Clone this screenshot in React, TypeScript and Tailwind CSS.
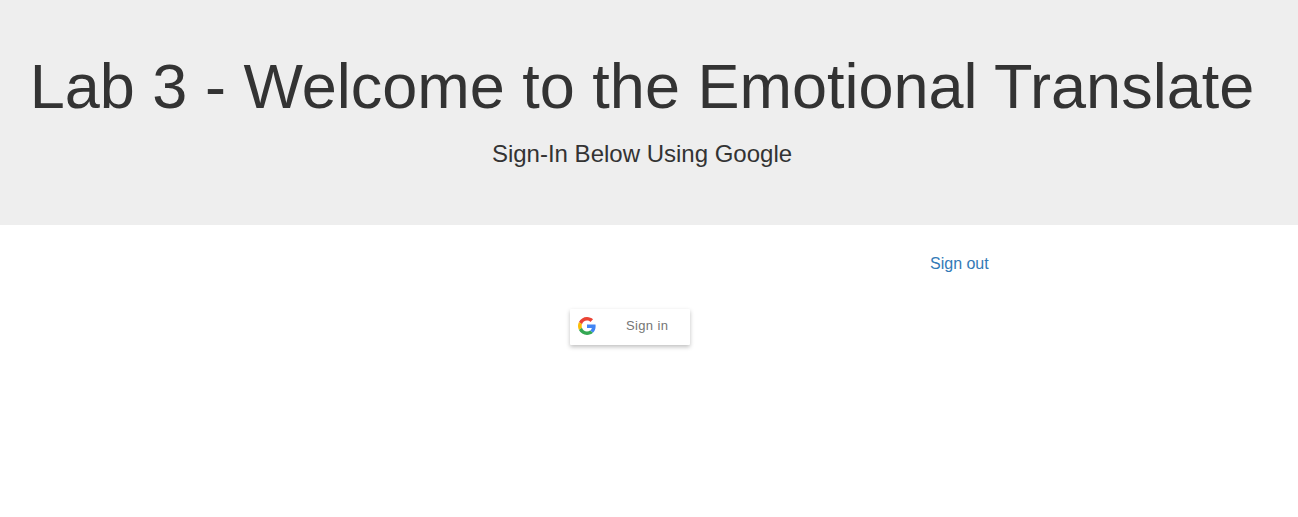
function GoogleLogo() {
  return (
    <svg width="18" height="18" viewBox="0 0 48 48" className="block">
      <path fill="#EA4335" d="M24 9.5c3.54 0 6.71 1.22 9.21 3.6l6.85-6.85C35.9 2.38 30.47 0 24 0 14.62 0 6.51 5.38 2.56 13.22l7.98 6.19C12.43 13.72 17.74 9.5 24 9.5z" />
      <path fill="#4285F4" d="M46.98 24.55c0-1.57-.15-3.09-.38-4.55H24v9.02h12.94c-.58 2.96-2.26 5.48-4.78 7.18l7.73 6c4.51-4.18 7.09-10.36 7.09-17.65z" />
      <path fill="#FBBC05" d="M10.53 28.59c-.48-1.45-.76-2.99-.76-4.59s.27-3.14.76-4.59l-7.98-6.19C.92 16.46 0 20.12 0 24c0 3.88.92 7.54 2.56 10.78l7.97-6.19z" />
      <path fill="#34A853" d="M24 48c6.48 0 11.93-2.13 15.89-5.81l-7.73-6c-2.15 1.45-4.92 2.3-8.16 2.3-6.26 0-11.57-4.22-13.47-9.91l-7.98 6.19C6.51 42.62 14.62 48 24 48z" />
    </svg>
  );
}

export default function App() {
  return (
    <div className="min-h-screen bg-white font-['Liberation_Sans',Arial,sans-serif] text-[#333333]">
      <header className="h-[225px] bg-[#eeeeee] pt-[52px] pr-[14px] text-center">
        <h1 className="text-[63px] leading-[69px] font-medium whitespace-nowrap">
          Lab 3 - Welcome to the Emotional Translate
        </h1>
        <h3 className="mt-5 text-2xl leading-[26px]">Sign-In Below Using Google</h3>
      </header>
      <main>
        <div className="flex pt-[27px] pl-[930px]">
          <a href="#" className="text-base leading-[23px] text-[#337ab7]">Sign out</a>
        </div>
        <div className="flex pt-[34px] pl-[570px]">
          <button className="flex h-9 w-[120px] items-center rounded-[1px] bg-white pb-0.5 pl-2 shadow-[0_2px_4px_0_rgba(0,0,0,0.25)]">
            <GoogleLogo />
            <span className="pl-[30px] text-[13px] leading-[34px] tracking-[0.36px] text-[#757575]">Sign in</span>
          </button>
        </div>
      </main>
    </div>
  );
}
